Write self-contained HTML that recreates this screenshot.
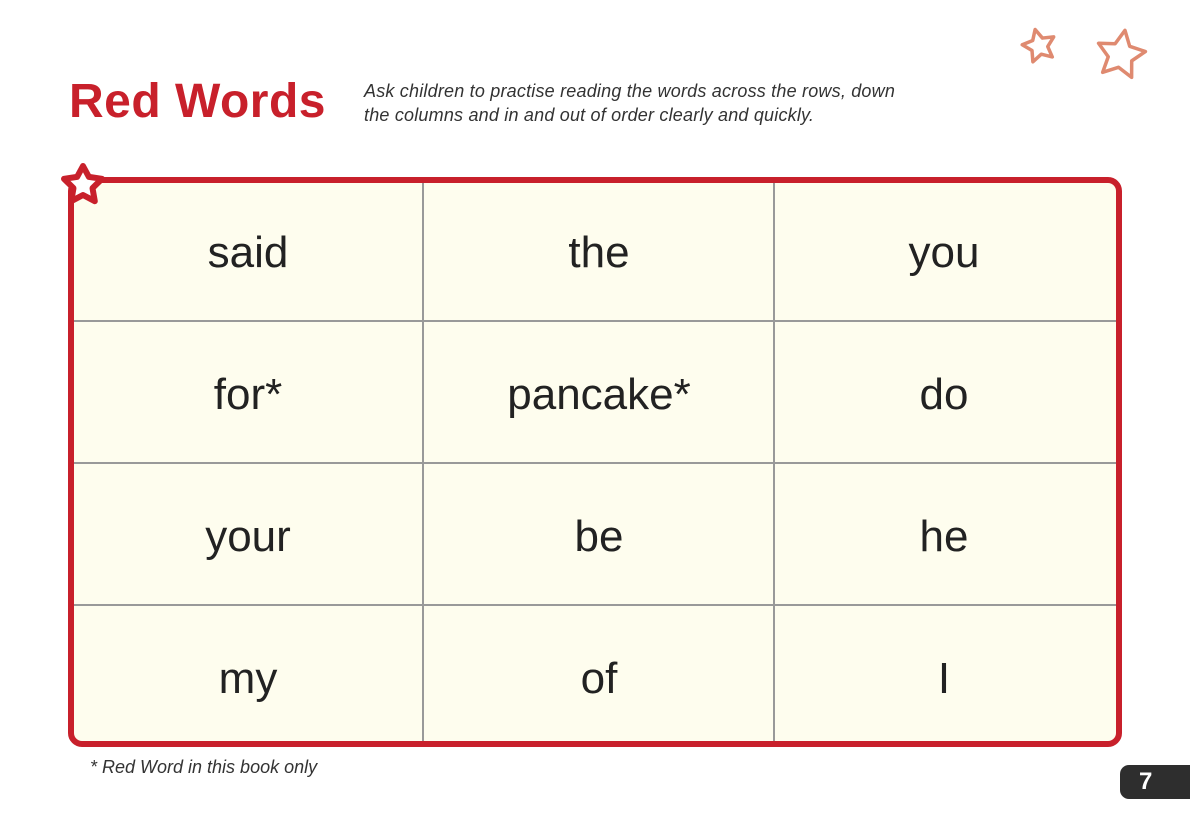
<!DOCTYPE html>
<html><head><meta charset="utf-8"><style>
body{margin:0;width:1190px;height:839px;background:#fff;position:relative;overflow:hidden;font-family:"Liberation Sans",sans-serif}
.t{position:absolute;left:69px;top:74px;font-size:48px;font-weight:bold;color:#c8202b;letter-spacing:0.5px}
.d{position:absolute;left:364px;top:79px;font-size:18px;letter-spacing:0.2px;font-style:italic;color:#333;line-height:24px}
.box{position:absolute;left:68px;top:177px;width:1042px;height:558px;border:6px solid #c8202b;border-radius:14px;background:#fefdee}
.v{position:absolute;top:0;bottom:0;width:2px;background:#999}
.h{position:absolute;left:0;right:0;height:2px;background:#999}
.w{position:absolute;width:340px;text-align:center;font-size:44px;color:#222;line-height:50px}
.f{position:absolute;left:90px;top:757px;font-size:18px;font-style:italic;color:#333}
.pg{position:absolute;left:1120px;top:765px;width:70px;height:34px;background:#2e2e2e;border-radius:9px 0 0 9px;color:#fff;font-weight:bold;font-size:24px;line-height:34px;text-indent:19px}
svg{position:absolute;left:0;top:0}
</style></head><body>
<div class="t">Red Words</div>
<div class="d">Ask children to practise reading the words across the rows, down<br>the columns and in and out of order clearly and quickly.</div>
<svg width="1190" height="839">
<g transform="rotate(-14 1039 45)"><polygon points="1039,29 1044,39.1 1055.2,40.7 1047.1,48.6 1049,59.8 1039,54.5 1029,59.8 1030.9,48.6 1022.8,40.7 1034,39.1" fill="none" stroke="#df8a70" stroke-width="3.5" stroke-linejoin="round"/></g>
<g transform="rotate(10 1121 53)"><polygon points="1121,30 1128.4,44.9 1144.8,47.3 1132.9,58.9 1135.7,75.2 1121,67.5 1106.3,75.2 1109.1,58.9 1097.2,47.3 1113.6,44.9" fill="none" stroke="#df8a70" stroke-width="3.5" stroke-linejoin="round"/></g>
</svg>
<div class="box">
<div class="v" style="left:348px"></div><div class="v" style="left:699px"></div>
<div class="h" style="top:137px"></div><div class="h" style="top:279px"></div><div class="h" style="top:421px"></div>
<div class="w" style="left:4px;top:45px">said</div><div class="w" style="left:355px;top:45px">the</div><div class="w" style="left:700px;top:45px">you</div>
<div class="w" style="left:4px;top:187px">for*</div><div class="w" style="left:355px;top:187px">pancake*</div><div class="w" style="left:700px;top:187px">do</div>
<div class="w" style="left:4px;top:329px">your</div><div class="w" style="left:355px;top:329px">be</div><div class="w" style="left:700px;top:329px">he</div>
<div class="w" style="left:4px;top:471px">my</div><div class="w" style="left:355px;top:471px">of</div><div class="w" style="left:700px;top:471px">I</div>
</div>
<svg width="1190" height="839">
<polygon points="83,166 88.9,176.9 102,178.8 92.5,188.1 94.8,201.2 83,195 71.2,201.2 73.5,188.1 64,178.8 77.1,176.9" fill="#fff" stroke="#c8202b" stroke-width="6" stroke-linejoin="round"/>
</svg>
<div class="f">* Red Word in this book only</div>
<div class="pg">7</div>
</body></html>
